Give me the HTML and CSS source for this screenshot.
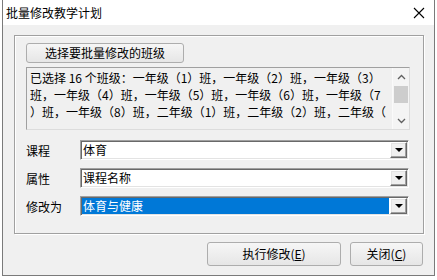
FILE: index.html
```html
<!DOCTYPE html>
<html lang="zh-CN">
<head>
  <meta charset="UTF-8">
  <title>批量修改教学计划</title>
  <link rel="stylesheet" href="styles.css">
</head>
<body>
  <div class="window">
    <div class="titlebar">
      <span class="title">批量修改教学计划</span>
      <svg class="close" width="12" height="12" viewBox="0 0 12 12">
        <path d="M1 1 L11 11 M11 1 L1 11" stroke="#000" stroke-width="1.1" fill="none"/>
      </svg>
    </div>
    <div class="content">
      <div class="group">
        <button class="btn pick">选择要批量修改的班级</button>
        <div class="listbox">
          <div class="list-text">
            <div>已选择 16 个班级：一年级（1）班，一年级（2）班，一年级（3）</div>
            <div>班，一年级（4）班，一年级（5）班，一年级（6）班，一年级（7</div>
            <div>）班，一年级（8）班，二年级（1）班，二年级（2）班，二年级（</div>
          </div>
          <div class="scrollbar">
            <div class="arrow">
              <svg width="9" height="6" viewBox="0 0 9 6"><path d="M1 5 L4.5 1.5 L8 5" stroke="#606060" stroke-width="1.3" fill="none"/></svg>
            </div>
            <div class="track"><div class="thumb"></div></div>
            <div class="arrow">
              <svg width="9" height="6" viewBox="0 0 9 6"><path d="M1 1 L4.5 4.5 L8 1" stroke="#606060" stroke-width="1.3" fill="none"/></svg>
            </div>
          </div>
        </div>
        <div class="fields">
          <div class="field-row">
            <span class="label">课程</span>
            <div class="combo">
              <span class="value">体育</span>
              <span class="drop"><span class="tri"></span></span>
            </div>
          </div>
          <div class="field-row">
            <span class="label">属性</span>
            <div class="combo">
              <span class="value">课程名称</span>
              <span class="drop"><span class="tri"></span></span>
            </div>
          </div>
          <div class="field-row">
            <span class="label">修改为</span>
            <div class="combo">
              <span class="value selected">体育与健康</span>
              <span class="drop"><span class="tri"></span></span>
            </div>
          </div>
        </div>
      </div>
      <div class="actions">
        <button class="btn run">执行修改(<u>E</u>)</button>
        <button class="btn close-btn">关闭(<u>C</u>)</button>
      </div>
    </div>
  </div>
</body>
</html>
```

FILE: styles.css
```css
* {
  box-sizing: border-box;
}
body {
  margin: 0;
  background: #fff;
  font-family: "Noto Sans CJK SC", "Microsoft YaHei", sans-serif;
  font-size: 12px;
  color: #000;
}
.window {
  margin-left: 2px;
  width: 433px;
  height: 276px;
  border: 1px solid #7a7a7a;
  border-top: none;
  background: #f0f0f0;
  display: flex;
  flex-direction: column;
}
.titlebar {
  height: 25px;
  background: #fff;
  display: flex;
  align-items: center;
  padding-left: 3px;
  padding-right: 9px;
}
.title {
  font-size: 12px;
  line-height: 16px;
}
.close {
  margin-left: auto;
  margin-top: 1px;
}
.content {
  padding: 10px 10px 0 11px;
}
.group {
  height: 199px;
  border: 1px solid #a0a0a0;
  box-shadow: inset 1px 1px #fff, 1px 1px #fff;
  padding: 7px 12px 0 11px;
}
.btn {
  font-family: inherit;
  font-size: 12px;
  color: #000;
  border: 1px solid #adadad;
  border-radius: 3px;
  background: linear-gradient(#f6f6f6, #e6e6e6);
  padding: 0;
  line-height: 16px;
}
.btn u {
  text-underline-offset: 1px;
}
.pick {
  display: block;
  width: 158px;
  height: 20px;
}
.listbox {
  margin-top: 4px;
  width: 384px;
  height: 63px;
  border: 1px solid #a0a0a0;
  border-right-color: #dcdcdc;
  border-bottom-color: #dcdcdc;
  display: flex;
  overflow: hidden;
}
.list-text {
  flex: 1;
  padding: 1px 0 0 3px;
  line-height: 17px;
  white-space: nowrap;
  overflow: hidden;
}
.scrollbar {
  width: 17px;
  background: #f4f4f4;
  border-left: 1px solid #fafafa;
  display: flex;
  flex-direction: column;
}
.arrow {
  height: 17px;
  display: flex;
  align-items: center;
  justify-content: center;
}
.track {
  flex: 1;
  padding-top: 1px;
}
.thumb {
  margin: 0 1px;
  height: 17px;
  background: #cdcdcd;
}
.fields {
  margin-top: 10px;
  display: flex;
  flex-direction: column;
  gap: 8px;
}
.field-row {
  display: flex;
  align-items: center;
  height: 20px;
}
.label {
  width: 54px;
}
.combo {
  width: 329px;
  height: 20px;
  display: flex;
  background: #fff;
  border: 1px solid;
  border-color: #a0a0a0 #fff #fff #a0a0a0;
  box-shadow: inset 1px 1px #696969, inset -1px -1px #e3e3e3;
  padding: 1px;
}
.value {
  flex: 1;
  line-height: 16px;
  padding-left: 1px;
  margin-right: 1px;
}
.value.selected {
  background: #0078d7;
  color: #fff;
}
.drop {
  width: 17px;
  height: 16px;
  background: #f0f0f0;
  border: 1px solid;
  border-color: #fff #696969 #696969 #fff;
  box-shadow: inset -1px -1px #a0a0a0, inset 1px 1px #e3e3e3;
  display: flex;
  align-items: center;
  justify-content: center;
}
.tri {
  width: 0;
  height: 0;
  border-left: 4px solid transparent;
  border-right: 4px solid transparent;
  border-top: 4px solid #000;
}
.actions {
  margin-top: 8px;
  display: flex;
  justify-content: flex-end;
  gap: 9px;
  padding-right: 1px;
}
.run {
  width: 134px;
  height: 24px;
}
.close-btn {
  width: 73px;
  height: 24px;
}
```
